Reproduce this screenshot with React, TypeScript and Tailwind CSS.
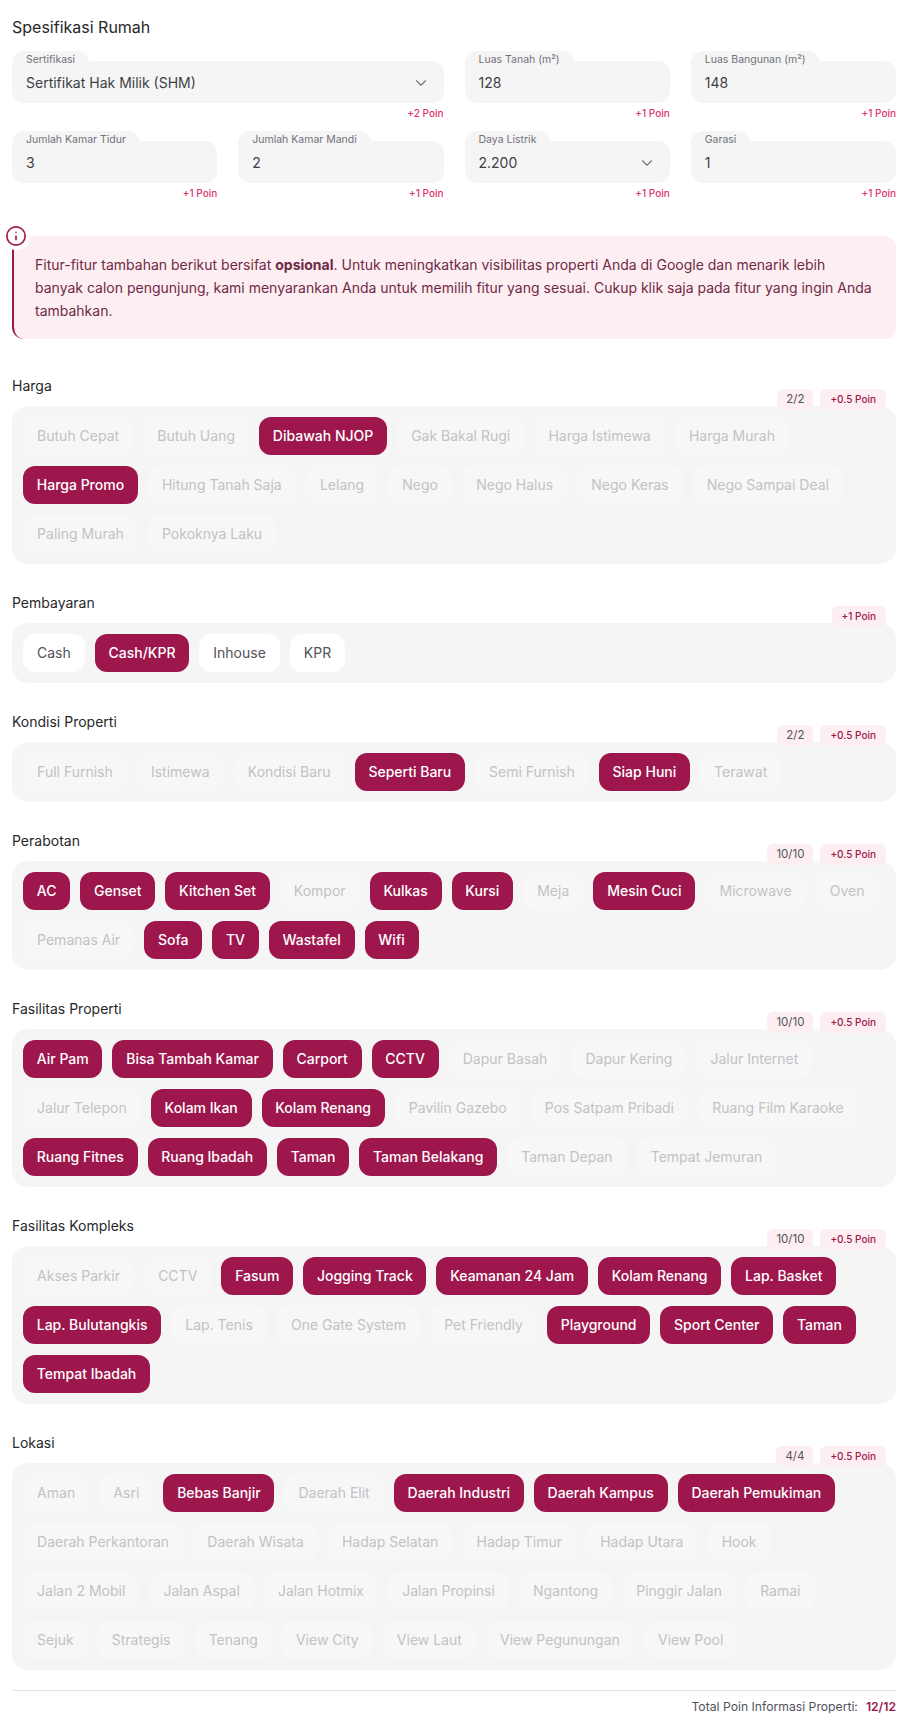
import { ChevronDown, Info } from 'lucide-react'

const font = { fontFamily: 'Inter, sans-serif' }

type Section = {
  title: string
  count?: string
  poin: string
  items: [string, boolean][]
  allEnabled?: boolean
}

const on = (s: string): [string, boolean] => [s, true]
const off = (s: string): [string, boolean] => [s, false]

const sections: Section[] = [
  {
    title: 'Harga',
    count: '2/2',
    poin: '+0.5 Poin',
    items: [
      off('Butuh Cepat'), off('Butuh Uang'), on('Dibawah NJOP'), off('Gak Bakal Rugi'), off('Harga Istimewa'), off('Harga Murah'),
      on('Harga Promo'), off('Hitung Tanah Saja'), off('Lelang'), off('Nego'), off('Nego Halus'), off('Nego Keras'), off('Nego Sampai Deal'),
      off('Paling Murah'), off('Pokoknya Laku'),
    ],
  },
  {
    title: 'Pembayaran',
    poin: '+1 Poin',
    allEnabled: true,
    items: [off('Cash'), on('Cash/KPR'), off('Inhouse'), off('KPR')],
  },
  {
    title: 'Kondisi Properti',
    count: '2/2',
    poin: '+0.5 Poin',
    items: [off('Full Furnish'), off('Istimewa'), off('Kondisi Baru'), on('Seperti Baru'), off('Semi Furnish'), on('Siap Huni'), off('Terawat')],
  },
  {
    title: 'Perabotan',
    count: '10/10',
    poin: '+0.5 Poin',
    items: [
      on('AC'), on('Genset'), on('Kitchen Set'), off('Kompor'), on('Kulkas'), on('Kursi'), off('Meja'), on('Mesin Cuci'), off('Microwave'), off('Oven'),
      off('Pemanas Air'), on('Sofa'), on('TV'), on('Wastafel'), on('Wifi'),
    ],
  },
  {
    title: 'Fasilitas Properti',
    count: '10/10',
    poin: '+0.5 Poin',
    items: [
      on('Air Pam'), on('Bisa Tambah Kamar'), on('Carport'), on('CCTV'), off('Dapur Basah'), off('Dapur Kering'), off('Jalur Internet'),
      off('Jalur Telepon'), on('Kolam Ikan'), on('Kolam Renang'), off('Pavilin Gazebo'), off('Pos Satpam Pribadi'), off('Ruang Film Karaoke'),
      on('Ruang Fitnes'), on('Ruang Ibadah'), on('Taman'), on('Taman Belakang'), off('Taman Depan'), off('Tempat Jemuran'),
    ],
  },
  {
    title: 'Fasilitas Kompleks',
    count: '10/10',
    poin: '+0.5 Poin',
    items: [
      off('Akses Parkir'), off('CCTV'), on('Fasum'), on('Jogging Track'), on('Keamanan 24 Jam'), on('Kolam Renang'), on('Lap. Basket'),
      on('Lap. Bulutangkis'), off('Lap. Tenis'), off('One Gate System'), off('Pet Friendly'), on('Playground'), on('Sport Center'), on('Taman'),
      on('Tempat Ibadah'),
    ],
  },
  {
    title: 'Lokasi',
    count: '4/4',
    poin: '+0.5 Poin',
    items: [
      off('Aman'), off('Asri'), on('Bebas Banjir'), off('Daerah Elit'), on('Daerah Industri'), on('Daerah Kampus'), on('Daerah Pemukiman'),
      off('Daerah Perkantoran'), off('Daerah Wisata'), off('Hadap Selatan'), off('Hadap Timur'), off('Hadap Utara'), off('Hook'),
      off('Jalan 2 Mobil'), off('Jalan Aspal'), off('Jalan Hotmix'), off('Jalan Propinsi'), off('Ngantong'), off('Pinggir Jalan'), off('Ramai'),
      off('Sejuk'), off('Strategis'), off('Tenang'), off('View City'), off('View Laut'), off('View Pegunungan'), off('View Pool'),
    ],
  },
]

function Field({ label, value, poin, select, className }: { label: string; value: string; poin: string; select?: boolean; className?: string }) {
  return (
    <div className={className}>
      <div className="relative h-[41.5px] rounded-xl bg-[#f5f5f5]">
        <span className="absolute -top-[10px] left-0 h-[20px] rounded-t-xl bg-[#f5f5f5] pl-[14px] pr-[14px] pt-[2px] text-[10.5px] leading-[14px] text-[#71717a]">
          {label}
        </span>
        <div className="relative flex h-full items-center justify-between pl-[14px] pr-[14px] pt-[2px] text-sm text-[#3f3f46]">
          <span>{value}</span>
          {select && <ChevronDown className="h-[18px] w-[18px] text-[#71717a]" strokeWidth={1.5} />}
        </div>
      </div>
      <p className="mt-[4.5px] text-right text-[10px] font-medium leading-[12px] text-[#e0336b]">{poin}</p>
    </div>
  )
}

function Chip({ label, selected, enabled }: { label: string; selected: boolean; enabled?: boolean }) {
  if (selected) {
    return <span className="rounded-xl bg-[#9d174d] px-[13.75px] py-[9px] text-sm font-medium leading-5 text-white">{label}</span>
  }
  if (enabled) {
    return <span className="rounded-xl bg-white px-[14px] py-[9px] text-sm leading-5 text-[#52525b]">{label}</span>
  }
  return <span className="rounded-xl bg-[#f7f7f7] px-[14.1px] py-[9px] text-sm leading-5 text-[#c2c2c5]">{label}</span>
}

function OptionSection({ section }: { section: Section }) {
  return (
    <section className="mt-[29px]">
      <h3 className="text-sm leading-5 text-[#27272a]">{section.title}</h3>
      <div className="relative mt-[10px] flex flex-wrap gap-x-[10px] gap-y-[11px] rounded-2xl bg-[#f5f5f5] p-[11px]">
        <div className="absolute -top-[17px] right-[10px] flex items-center gap-[7px]">
          {section.count && (
            <span className="rounded-md bg-[#fdeef1] px-[9px] py-[2px] text-[11.5px] leading-[17px] text-[#52525b]">{section.count}</span>
          )}
          <span className="rounded-md bg-[#fdeef1] px-[10px] py-[2px] text-[10px] font-medium leading-[17px] text-[#9d174d]">{section.poin}</span>
        </div>
        {section.items.map(([label, selected]) => (
          <Chip key={label} label={label} selected={selected} enabled={section.allEnabled} />
        ))}
      </div>
    </section>
  )
}

export default function App() {
  return (
    <div className="min-h-[1722px] bg-white pl-3 pr-[14px] pt-[17px]" style={font}>
      <h2 className="text-base leading-[20px] text-[#27272a]">Spesifikasi Rumah</h2>

      <div className="mt-[24px] grid grid-cols-4 gap-x-[21px] gap-y-[22px]">
        <Field className="col-span-2" label="Sertifikasi" value="Sertifikat Hak Milik (SHM)" poin="+2 Poin" select />
        <Field label="Luas Tanah (m²)" value="128" poin="+1 Poin" />
        <Field label="Luas Bangunan (m²)" value="148" poin="+1 Poin" />
        <Field label="Jumlah Kamar Tidur" value="3" poin="+1 Poin" />
        <Field label="Jumlah Kamar Mandi" value="2" poin="+1 Poin" />
        <Field label="Daya Listrik" value="2.200" poin="+1 Poin" select />
        <Field label="Garasi" value="1" poin="+1 Poin" />
      </div>

      <div className="relative mt-[37px] rounded-xl border-l-2 border-[#9d174d] bg-[#fdeef1] py-[17px] pl-[21px] pr-5 text-sm leading-[23px] text-[#6f2a48]">
        Fitur-fitur tambahan berikut bersifat <b className="font-bold">opsional</b>. Untuk meningkatkan visibilitas properti Anda di Google dan menarik lebih banyak calon pengunjung, kami menyarankan Anda untuk memilih fitur yang sesuai. Cukup klik saja pada fitur yang ingin Anda tambahkan.
        <div className="absolute -left-[12px] -top-[14px] rounded-full bg-white p-[3px]">
          <Info className="h-[22px] w-[22px] text-[#9d174d]" strokeWidth={1.8} />
        </div>
      </div>

      <div className="mt-[37px] [&>section:first-child]:mt-0">
        {sections.map((s) => (
          <OptionSection key={s.title} section={s} />
        ))}
      </div>

      <div className="mt-[20px] flex justify-end gap-2 border-t border-[#e4e4e7] pt-[8px] text-[12.2px] leading-[16px] text-[#52525b]">
        <span>Total Poin Informasi Properti:</span>
        <span className="font-semibold text-[#9d174d]">12/12</span>
      </div>
    </div>
  )
}
